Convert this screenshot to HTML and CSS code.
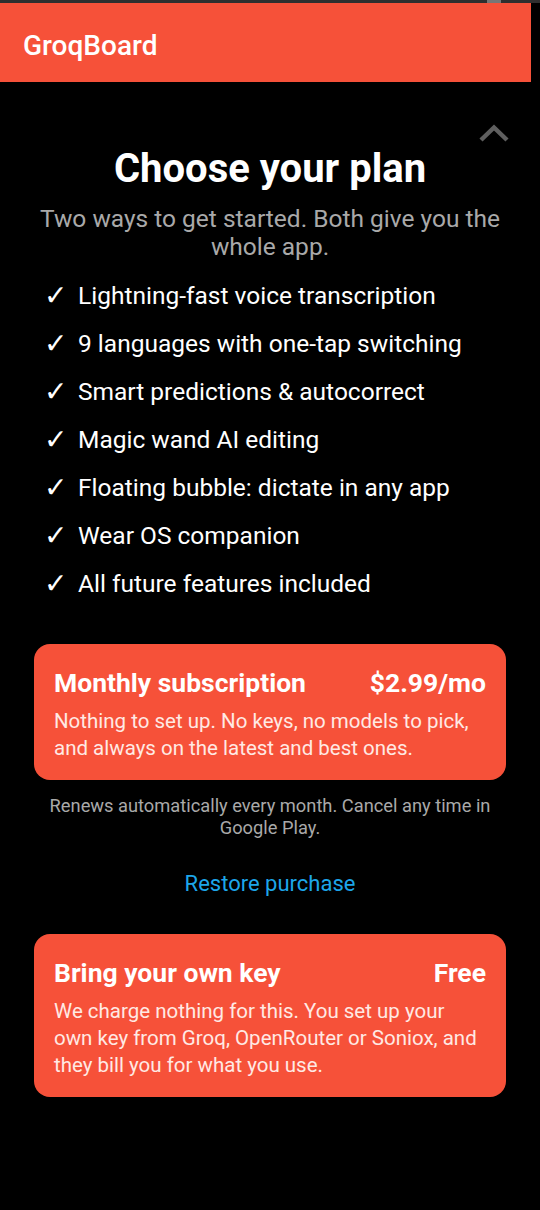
FILE: index.html
```html
<!DOCTYPE html>
<html lang="en">
<head>
<meta charset="utf-8">
<title>GroqBoard</title>
<link rel="stylesheet" href="styles.css">
</head>
<body>
<div class="status"><span class="status-pill"></span></div>
<header class="appbar"><span class="app-title">GroqBoard</span></header>
<main class="content">
  <div class="close-row">
    <svg class="chevron" width="30" height="18" viewBox="0 0 30 18"><path d="M2 16 L15 3.5 L28 16" fill="none" stroke="#5f5f5f" stroke-width="4.5"/></svg>
  </div>
  <h1 class="title">Choose your plan</h1>
  <p class="subtitle">Two ways to get started. Both give you the whole app.</p>
  <ul class="features">
    <li><span class="check">✓</span>Lightning-fast voice transcription</li>
    <li><span class="check">✓</span>9 languages with one-tap switching</li>
    <li><span class="check">✓</span>Smart predictions &amp; autocorrect</li>
    <li><span class="check">✓</span>Magic wand AI editing</li>
    <li><span class="check">✓</span>Floating bubble: dictate in any app</li>
    <li><span class="check">✓</span>Wear OS companion</li>
    <li><span class="check">✓</span>All future features included</li>
  </ul>
  <section class="card card-monthly">
    <div class="card-head"><span>Monthly subscription</span><span>$2.99/mo</span></div>
    <p class="card-body">Nothing to set up. No keys, no models to pick, and always on the latest and best ones.</p>
  </section>
  <p class="note">Renews automatically every month. Cancel any time in Google Play.</p>
  <a class="restore">Restore purchase</a>
  <section class="card card-byok">
    <div class="card-head"><span>Bring your own key</span><span>Free</span></div>
    <p class="card-body">We charge nothing for this. You set up your own key from Groq, OpenRouter or Soniox, and they bill you for what you use.</p>
  </section>
</main>
</body>
</html>
```

FILE: styles.css
```css
* { box-sizing: border-box; }
html, body { margin: 0; padding: 0; background: #000; }
body {
  font-family: Roboto, "Noto Sans", sans-serif;
  color: #fff;
  width: 540px;
  height: 1210px;
  overflow: hidden;
}
.status {
  height: 3px;
  background: #2f2f2f;
  position: relative;
}
.status-pill {
  position: absolute;
  left: 487px;
  top: 0;
  width: 14px;
  height: 3px;
  background: #777;
}
.appbar {
  width: 531px;
  height: 79px;
  background: #f65139;
  display: flex;
  align-items: center;
  padding: 5px 0 0 23px;
}
.app-title {
  font-size: 28px;
  font-weight: 500;
  color: #fff;
}
.content {
  padding: 0 34px;
  display: flex;
  flex-direction: column;
}
.close-row {
  display: flex;
  justify-content: flex-end;
  margin: 42px -3px 0 0;
  height: 18px;
}
.chevron { display: block; }
.title {
  margin: 5px 0 0;
  text-align: center;
  font-size: 40px;
  font-weight: 700;
  line-height: 44px;
}
.subtitle {
  margin: 14px -10px 0;
  text-align: center;
  font-size: 24.5px;
  line-height: 28px;
  color: #a9a9a9;
}
.features {
  list-style: none;
  margin: 10px 0 0;
  padding: 0;
}
.features li {
  display: flex;
  align-items: center;
  height: 48px;
  font-size: 24.5px;
  color: #fff;
}
.check {
  width: 44px;
  padding-left: 10px;
  font-family: "DejaVu Sans", sans-serif;
  font-size: 28px;
  font-weight: 700;
}
.card {
  background: #f65139;
  border-radius: 16px;
  padding: 23px 20px 18px;
}
.card-monthly { margin-top: 37px; }
.card-byok { margin-top: 36px; }
.card-head {
  display: flex;
  justify-content: space-between;
  font-size: 26.5px;
  font-weight: 700;
  line-height: 32px;
}
.card-body {
  margin: 9px 0 0;
  font-size: 20.5px;
  line-height: 27px;
  color: #ffe9e4;
}
.note {
  margin: 15px -10px 0;
  text-align: center;
  font-size: 18.3px;
  line-height: 22px;
  color: #a9a9a9;
}
.restore {
  display: block;
  text-align: center;
  margin-top: 31px;
  font-size: 22px;
  line-height: 28px;
  color: #1da6ea;
}
```
